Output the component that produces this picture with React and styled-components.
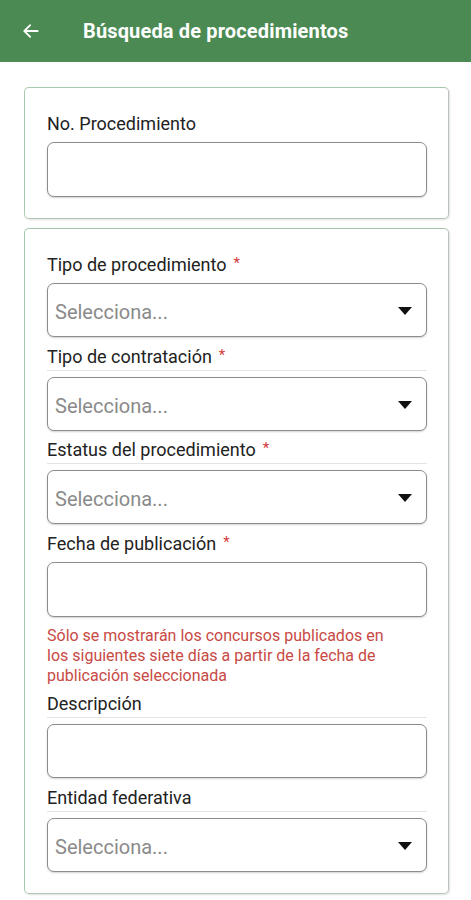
import React from "react";
import styled, { createGlobalStyle } from "styled-components";

const Global = createGlobalStyle`
  html, body { margin: 0; padding: 0; background: #ffffff; }
  body { font-family: Roboto, "Noto Sans", "Liberation Sans", sans-serif; }
  * { box-sizing: border-box; }
`;

const Page = styled.div`
  width: 471px;
  min-height: 900px;
  background: #fff;
  display: flex;
  flex-direction: column;
`;

const Header = styled.header`
  height: 62px;
  background: #4b8b53;
  display: flex;
  align-items: center;
  padding-left: 21px;
  flex-shrink: 0;
`;

const BackButton = styled.button`
  border: none;
  background: none;
  padding: 0;
  width: 20px;
  height: 20px;
  display: flex;
  align-items: center;
  justify-content: center;
  cursor: pointer;
`;

const Title = styled.h1`
  margin: 0 0 0 42px;
  color: #fff;
  font-family: Roboto, "Noto Sans", sans-serif;
  font-weight: 700;
  font-size: 20px;
  letter-spacing: 0.15px;
`;

const Content = styled.main`
  display: flex;
  flex-direction: column;
  gap: 9px;
  padding: 25px 22px 0 24px;
`;

const Card = styled.section`
  border: 1px solid #a8c8ae;
  border-right-color: #b9c2bb;
  border-bottom-color: #b3c7b6;
  border-radius: 5px;
  box-shadow: 1px 1px 2px rgba(0, 0, 0, 0.12);
  padding: 26px 21px 21px 22px;
  display: flex;
  flex-direction: column;
`;

const Field = styled.div`
  display: flex;
  flex-direction: column;
  margin-top: ${(p) => p.$mt || 0}px;
`;

const Label = styled.div`
  display: flex;
  align-items: flex-start;
  height: 24px;
  font-size: 18px;
  line-height: 20px;
  color: #222;
  padding-bottom: 3px;
  border-bottom: 1px solid ${(p) => (p.$divider ? "#e4e4e4" : "transparent")};
  margin-bottom: ${(p) => (p.$divider ? 6 : 4)}px;
  white-space: nowrap;
`;

const Req = styled.span`
  color: #d23a3a;
  margin-left: 7px;
  font-size: 15px;
  line-height: 16px;
`;

const Box = styled.div`
  height: ${(p) => p.$h || 54}px;
  border: 1px solid #8c8c8c;
  border-radius: 7px;
  box-shadow: 0 1px 2px rgba(0, 0, 0, 0.18);
  display: flex;
  align-items: center;
  padding: 0 14px 0 7px;
  background: #fff;
`;

const Placeholder = styled.span`
  flex: 1;
  font-size: 20px;
  color: #8a8a8a;
  padding-top: 3px;
`;

const Caret = styled.span`
  width: 0;
  height: 0;
  border-left: 7px solid transparent;
  border-right: 7px solid transparent;
  border-top: 8px solid #111;
  margin-top: 2px;
`;

const Hint = styled.p`
  margin: 9px 0 0;
  max-width: 345px;
  font-size: 16px;
  line-height: 20px;
  color: #c84a45;
`;

const Arrow = () => (
  <svg width="20" height="20" viewBox="0 0 24 24" fill="none" stroke="#fff" strokeWidth="2.2" strokeLinecap="round" strokeLinejoin="round">
    <path d="M20 12H4.5" />
    <path d="M11 5l-7 7 7 7" />
  </svg>
);

const Select = () => (
  <Box>
    <Placeholder>Selecciona...</Placeholder>
    <Caret />
  </Box>
);

export default function App() {
  return (
    <Page>
      <Global />
      <Header>
        <BackButton aria-label="Regresar">
          <Arrow />
        </BackButton>
        <Title>Búsqueda de procedimientos</Title>
      </Header>
      <Content>
        <Card>
          <Field>
            <Label>No. Procedimiento</Label>
            <Box $h={55} />
          </Field>
        </Card>
        <Card>
          <Field>
            <Label>
              Tipo de procedimiento<Req>*</Req>
            </Label>
            <Select />
          </Field>
          <Field $mt={10}>
            <Label $divider>
              Tipo de contratación<Req>*</Req>
            </Label>
            <Select />
          </Field>
          <Field $mt={9}>
            <Label $divider>
              Estatus del procedimiento<Req>*</Req>
            </Label>
            <Select />
          </Field>
          <Field $mt={10}>
            <Label>
              Fecha de publicación<Req>*</Req>
            </Label>
            <Box $h={55} />
          </Field>
          <Hint>
            Sólo se mostrarán los concursos publicados en los siguientes siete días a partir de la fecha de publicación seleccionada
          </Hint>
          <Field $mt={8}>
            <Label $divider>Descripción</Label>
            <Box />
          </Field>
          <Field $mt={10}>
            <Label $divider>Entidad federativa</Label>
            <Select />
          </Field>
        </Card>
      </Content>
    </Page>
  );
}
